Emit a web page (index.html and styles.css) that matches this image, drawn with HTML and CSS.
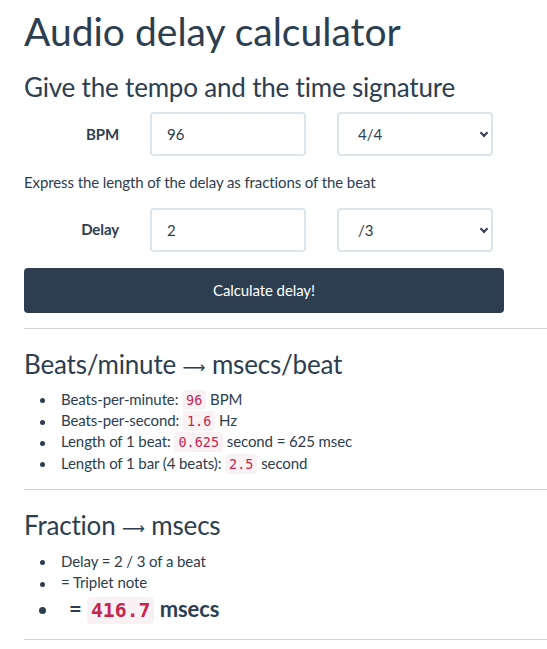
FILE: index.html
```
<!DOCTYPE html>
<html lang="en">
<head>
<meta charset="utf-8">
<title>Audio delay calculator</title>
<link rel="stylesheet" href="styles.css">
</head>
<body>
<div class="page">
  <h1 class="title">Audio delay calculator</h1>
  <h3 class="subtitle">Give the tempo and the time signature</h3>
  <form class="form">
    <div class="row row-first">
      <label class="label" for="bpm">BPM</label>
      <input class="control" id="bpm" type="text" value="96">
      <div class="select-wrap">
        <select class="control select">
          <option>4/4</option>
        </select>
      </div>
    </div>
    <p class="hint">Express the length of the delay as fractions of the beat</p>
    <div class="row">
      <label class="label" for="delay">Delay</label>
      <input class="control" id="delay" type="text" value="2">
      <div class="select-wrap">
        <select class="control select">
          <option>/3</option>
        </select>
      </div>
    </div>
    <button class="btn" type="button">Calculate delay!</button>
  </form>
  <hr class="rule">
  <h3 class="section-title">Beats/minute <span class="arrow">⟶</span> msecs/beat</h3>
  <ul class="list">
    <li>Beats-per-minute: <code class="code">96</code> BPM</li>
    <li>Beats-per-second: <code class="code">1.6</code> Hz</li>
    <li>Length of 1 beat: <code class="code">0.625</code> second = 625 msec</li>
    <li>Length of 1 bar (4 beats): <code class="code">2.5</code> second</li>
  </ul>
  <hr class="rule">
  <h3 class="section-title">Fraction <span class="arrow">⟶</span> msecs</h3>
  <ul class="list list-small">
    <li>Delay = 2 / 3 of a beat</li>
    <li>= Triplet note</li>
    <li class="big"><span class="result">= <code class="code">416.7</code> msecs</span></li>
  </ul>
  <hr class="rule rule-last">
</div>
</body>
</html>
```
FILE: styles.css
```
html, body {
  margin: 0;
  padding: 0;
  background: #ffffff;
}

body {
  font-family: Lato, "Open Sans", sans-serif;
  font-size: 15px;
  line-height: 1.42857;
  color: #2c3e50;
  letter-spacing: -0.1px;
}

.page {
  padding-left: 24px;
}

.title {
  font-size: 39px;
  font-weight: 400;
  line-height: 1.1;
  margin: 10px 0 0;
  letter-spacing: 0;
}

.subtitle {
  font-size: 26px;
  font-weight: 400;
  line-height: 1.1;
  margin: 20px 0 0;
  letter-spacing: -0.19px;
}

.form {
  margin-top: 11px;
  width: 480px;
}

.row {
  display: grid;
  grid-template-columns: 95px 156px 156px;
  column-gap: 31px;
  align-items: center;
}

.label {
  justify-self: end;
  font-weight: 700;
}

.control {
  box-sizing: border-box;
  height: 44px;
  width: 156px;
  border: 2px solid #dce4ec;
  border-radius: 4px;
  background: #ffffff;
  font-family: Lato, sans-serif;
  font-size: 15px;
  color: #2c3e50;
  padding: 0 15px;
  margin: 0;
  outline: none;
}

.select-wrap {
  position: relative;
  width: 156px;
  height: 44px;
}

.select {
  appearance: none;
  -webkit-appearance: none;
  padding-left: 19px;
}

.select-wrap::after {
  content: "";
  position: absolute;
  right: 6px;
  top: 18px;
  width: 4px;
  height: 4px;
  border-right: 2px solid #2c3e50;
  border-bottom: 2px solid #2c3e50;
  transform: rotate(45deg);
  pointer-events: none;
}

.hint {
  margin: 16px 0 14px;
}

.btn {
  display: block;
  box-sizing: border-box;
  width: 480px;
  height: 45px;
  margin-top: 16px;
  border: 0;
  border-radius: 4px;
  background: #2c3e50;
  color: #ffffff;
  font-family: Lato, sans-serif;
  font-size: 15px;
  font-weight: 400;
  letter-spacing: -0.1px;
}

.rule {
  border: 0;
  border-top: 1px solid #d2d2d2;
  margin: 15px 0 0;
  height: 0;
}

.section-title {
  font-size: 26px;
  font-weight: 400;
  line-height: 1.1;
  margin: 21px 0 10px;
  letter-spacing: -0.19px;
}

.arrow {
  font-family: "DejaVu Sans", sans-serif;
  font-size: 16px;
  line-height: 0;
  letter-spacing: 0;
  vertical-align: 1px;
}

.list {
  margin: 0;
  padding-left: 37px;
  list-style: none;
}

.list li::before {
  content: "";
  display: inline-block;
  width: 5px;
  height: 5px;
  border-radius: 50%;
  background: #2c3e50;
  vertical-align: middle;
  margin-left: -21px;
  margin-right: 16px;
}

.list-small {
  margin-top: 11px;
}

.code {
  font-family: "DejaVu Sans Mono", "Liberation Mono", monospace;
  font-size: 90%;
  color: #c7254e;
  background: #f9f2f4;
  padding: 2px 4px;
  border-radius: 4px;
  letter-spacing: 0;
}

.list .big {
  font-size: 22px;
  font-weight: 700;
  line-height: 30px;
}

.list .big::before {
  width: 7px;
  height: 7px;
  margin-left: -22.5px;
  margin-right: 15.5px;
}

.result {
  padding-left: 8px;
}

.rule-last {
  margin-top: 13px;
}
```
